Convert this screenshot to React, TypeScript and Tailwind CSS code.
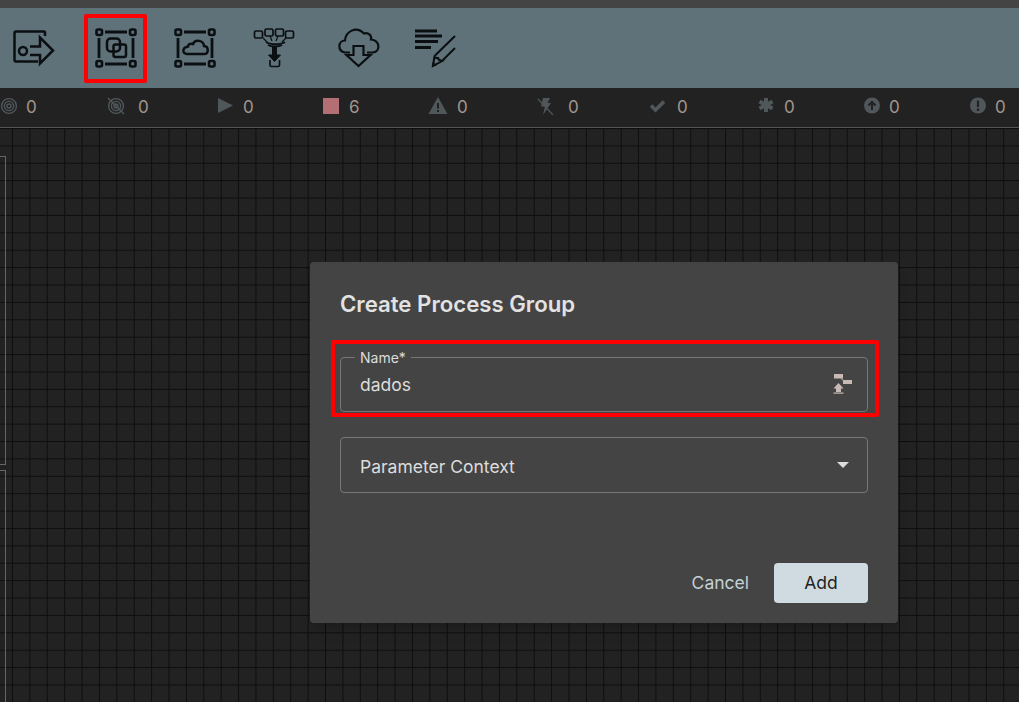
import type { ReactNode } from 'react';

const Handles = () => (
  <g fill="none" stroke="#0b0f12" strokeWidth="2.600">
    <rect x="0.500" y="0.500" width="5.500" height="5.500" rx="1.500" />
    <rect x="34" y="0.500" width="5.500" height="5.500" rx="1.500" />
    <rect x="0.500" y="32" width="5.500" height="5.500" rx="1.500" />
    <rect x="34" y="32" width="5.500" height="5.500" rx="1.500" />
    <path d="M9 3H31M9 35H31M3 9V29M37 9V29" strokeWidth="2.800" />
  </g>
);

function ToolIcon({ box, children }: { box: string; children: ReactNode }) {
  return (
    <svg width="44" height="44" viewBox={box} fill="none" stroke="#0b0f12" strokeWidth="2.500" className="shrink-0">
      {children}
    </svg>
  );
}

const stats = [
  {
    width: 'w-[106px]', gap: 'ml-[6px]', value: '0',
    icon: <g fill="none" stroke="#50575a" strokeWidth="1.4"><circle cx="9" cy="9" r="7.4" /><circle cx="9" cy="9" r="4.6" /><circle cx="9" cy="9" r="2" /></g>,
  },
  {
    width: 'w-[110px]', gap: 'ml-[12px]', value: '0',
    icon: <g fill="none" stroke="#50575a" strokeWidth="1.4"><circle cx="10" cy="9" r="7.4" /><circle cx="10" cy="9" r="4.6" /><circle cx="10" cy="9" r="2" /><path d="M2 1L18 17" /></g>,
  },
  {
    width: 'w-[106px]', gap: 'ml-[7px]', value: '0',
    icon: <path d="M2 1L17 8.5L2 16Z" fill="#50575a" />,
  },
  {
    width: 'w-[106px]', gap: 'ml-[7px]', value: '6',
    icon: <rect x="1" y="1" width="16" height="16" fill="#b36f74" />,
  },
  {
    width: 'w-[108px]', gap: 'ml-[9px]', value: '0',
    icon: <path fillRule="evenodd" d="M10 0L19.500 17H0.500ZM9 6V11.500H11V6ZM9 13V15H11V13Z" fill="#50575a" />,
  },
  {
    width: 'w-[112px]', gap: 'ml-[12px]', value: '0',
    icon: <g><path d="M7 1H14L11.500 6H15L7 18L9 9.500H5Z" fill="#50575a" /><path d="M2 2L17 18" stroke="#50575a" strokeWidth="1.2" /></g>,
  },
  {
    width: 'w-[108px]', gap: 'ml-[9px]', value: '0',
    icon: <path d="M3 8.500L7.500 13L16 4.500" fill="none" stroke="#50575a" strokeWidth="3.600" />,
  },
  {
    width: 'w-[106px]', gap: 'ml-[8px]', value: '0',
    icon: <path d="M10 1V15M3.500 4.500L16.500 11.500M16.500 4.500L3.500 11.500" fill="none" stroke="#50575a" strokeWidth="4" />,
  },
  {
    width: 'w-[106px]', gap: 'ml-[7px]', value: '0',
    icon: <g><circle cx="10" cy="8.500" r="8" fill="#50575a" /><path d="M10 13V5M6.500 8.500L10 5L13.500 8.500" fill="none" stroke="#222222" strokeWidth="2" /></g>,
  },
  {
    width: 'w-[50px]', gap: 'ml-[7px]', value: '0',
    icon: <g><circle cx="10" cy="8.500" r="8" fill="#50575a" /><path d="M10 3.500V10M10 11.500V14" fill="none" stroke="#222222" strokeWidth="2.200" /></g>,
  },
];

export default function App() {
  return (
    <div className="relative flex h-screen w-screen flex-col overflow-hidden bg-[#222222] font-['Inter',sans-serif]">
      {/* top strip */}
      <div className="h-2 shrink-0 bg-[#444444]" />

      {/* toolbar */}
      <div className="flex h-20 shrink-0 items-center bg-[#5f7279] pl-3">
        <ToolIcon box="12 26 44 44">
          <path d="M45 36V32.500C45 32 44.500 31.500 44 31.500H16C15 31.500 14.500 32 14.500 33V60C14.500 61 15 61.500 16 61.500H38" />
          <circle cx="23" cy="51" r="4" />
          <path d="M30 46.500H40V37.500L53 50.500L40 63.500V55H30" />
        </ToolIcon>
        <div className="ml-[28px] flex h-[69px] w-[63px] items-center justify-center rounded-[2px] border-4 border-[#ff0000]">
          <ToolIcon box="92 26 44 44">
            <g transform="translate(94 29)"><Handles /></g>
            <rect x="105" y="38.500" width="13" height="13" rx="3.500" />
            <rect x="111.500" y="44.500" width="12.500" height="12.500" rx="2" />
          </ToolIcon>
        </div>
        <div className="ml-[26px]">
          <ToolIcon box="172 26 44 44">
            <g transform="translate(174 29)"><Handles /></g>
            <path d="M186 54H203C208 54 208 46.500 203 46C202.500 40 194 39 192 44C189 43 187 44.500 187 46.500C181 47.500 181 54 186 54Z" />
          </ToolIcon>
        </div>
        <div className="ml-[35px]">
          <ToolIcon box="252 26 44 44">
            <rect x="254.500" y="31" width="8" height="7" rx="1.500" strokeWidth="1.700" />
            <rect x="265" y="29" width="8" height="7" rx="1.500" strokeWidth="1.700" />
            <rect x="275.500" y="29" width="8" height="7" rx="1.500" strokeWidth="1.700" />
            <rect x="285.500" y="31" width="8" height="7" rx="1.500" strokeWidth="1.700" />
            <path d="M263 38L267 42M270 36L272 41M278 36L276 41M286 38L282 42" strokeWidth="1.200" />
            <path d="M266 42C270 45 281 45 285 42" strokeWidth="1.800" />
            <path d="M268 45C271 47 279 47 282 45" strokeWidth="1.800" />
            <path d="M272.500 47H276.500V55H280.500L274.500 61.500L268.500 55H272.500Z" fill="#0b0f12" strokeWidth="1" />
            <path d="M270 60V65C270 66 270.500 66.500 271.500 66.500H278C279 66.500 279.500 66 279.500 65V60" strokeWidth="1.700" />
          </ToolIcon>
        </div>
        <div className="ml-[41px]">
          <ToolIcon box="335 26 44 44">
            <path d="M348 52.500H343C335 51 336 40.500 343 40.500C343.500 32 354 25 362 33.500C366 32 370 35.500 369 39.500C378 40.500 379 51 371 52.500H365" strokeWidth="2.200" />
            <path d="M351.500 46H361.500V55H368.500L356.500 66L344.500 55H351.500Z" strokeWidth="2.200" />
          </ToolIcon>
        </div>
        <div className="ml-[32px]">
          <ToolIcon box="412 26 44 44">
            <path d="M414 31H436M414 36H441M414 41.500H437M414 47.500H430" strokeWidth="3" />
            <path d="M433.500 56L454 36M441 61L454 48M433.500 56C433 58 436 58 437 58C437 60 439 60.500 441 61L432 66Z" strokeWidth="2" />
            <path d="M431 66.500L432 62L435.500 65Z" fill="#0b0f12" strokeWidth="0.500" />
          </ToolIcon>
        </div>
      </div>

      {/* status row */}
      <div className="flex h-10 shrink-0 items-center border-b border-[#555555] bg-[#222222] text-[17px] text-[#a3958c]">
        {stats.map((s, i) => (
          <div key={i} className={`flex shrink-0 items-center ${s.width}`}>
            <svg width="20" height="18" viewBox="0 0 20 18" className="mb-1 shrink-0">{s.icon}</svg>
            <span className={s.gap}>{s.value}</span>
          </div>
        ))}
      </div>

      {/* canvas */}
      <div className="flex min-h-0 flex-1 flex-col bg-[#222222] bg-[linear-gradient(to_right,#0e0e0e_1.2px,transparent_1.2px),linear-gradient(to_bottom,#0e0e0e_1.2px,transparent_1.2px)] bg-[size:17.4px_17.4px] bg-[position:12px_0px] pt-7">
        <div className="h-[309px] w-[6px] shrink-0 border-y border-r border-[#666666]" />
        <div className="mt-[5px] w-[6px] flex-1 border-t border-r border-[#666666]" />
      </div>

      {/* dialog */}
      <div className="absolute top-[262px] left-[310px] flex h-[361px] w-[588px] flex-col rounded-[4px] bg-[#444444] px-[21px] shadow-lg">
        <h2 className="mt-[27px] ml-[9px] text-[22.200px] leading-[30px] font-semibold text-[#e2e2e2]">Create Process Group</h2>

        <div className="mt-[21px] h-[77px] w-[548px] rounded-[2px] border-4 border-[#ff0000] pt-[13px] pr-[7px] pl-[5px]">
          <div className="relative flex h-[55px] items-center justify-between rounded-[4px] border border-[#777777] pr-[14px] pl-[19px] text-[17.500px] text-[#dddddd]">
            <label className="absolute -top-[8px] left-[14px] bg-[#444444] px-[5px] text-[14px] leading-[15px] text-[#dddddd]">Name*</label>
            <span className="pt-[2px]">dados</span>
            <svg width="20" height="22" viewBox="0 0 20 22" fill="#c9b9b4">
              <rect x="1" y="0" width="9" height="4.500" />
              <rect x="10" y="6" width="9" height="4" />
              <path d="M8 4.500L11 7" stroke="#c9b9b4" fill="none" />
              <path d="M5.500 9L10.500 14.500H8V18H3V14.500H0.500Z" />
              <rect x="0.500" y="18.500" width="10" height="1.200" />
            </svg>
          </div>
        </div>

        <div className="mt-5 ml-[9px] flex h-[56px] w-[528px] items-center justify-between rounded-[4px] border border-[#777777] pr-[18px] pl-[19px] text-[17.500px] text-[#dddddd]">
          <span className="pt-1">Parameter Context</span>
          <span className="h-0 w-0 border-x-[6px] border-t-[6px] border-x-transparent border-t-[#dddddd]" />
        </div>

        <div className="mt-[70px] ml-[9px] flex w-[528px] items-center justify-end gap-[25px] text-[17.500px]">
          <button className="text-[#c5d1d6]">Cancel</button>
          <button className="h-10 w-[94px] rounded-[4px] bg-[#cfdbe0] text-[#222222]">Add</button>
        </div>
      </div>
    </div>
  );
}
